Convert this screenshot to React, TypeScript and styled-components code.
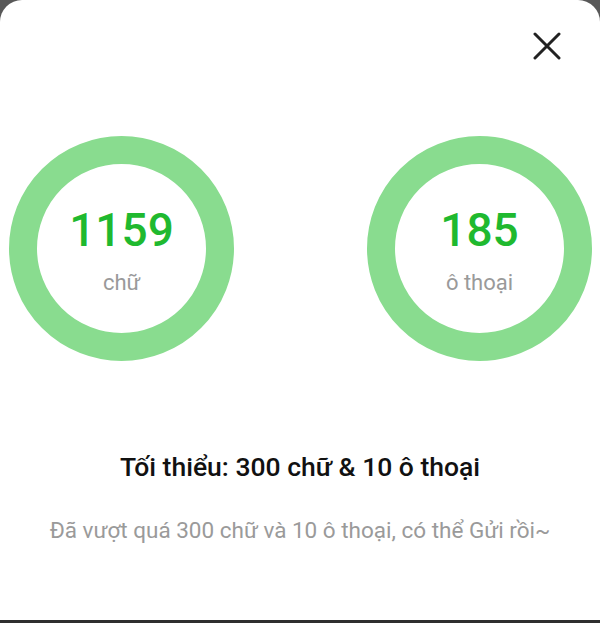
import React from "react";
import styled, { createGlobalStyle } from "styled-components";

const Global = createGlobalStyle`
  html, body {
    margin: 0;
    padding: 0;
    background: #333;
  }
  body {
    font-family: Roboto, "Noto Sans", "Liberation Sans", sans-serif;
  }
`;

const Backdrop = styled.div`
  width: 600px;
  height: 623px;
  background: #585858;
  border-bottom: 3px solid #2e2e2e;
  box-sizing: border-box;
`;

const Sheet = styled.div`
  width: 600px;
  height: 620px;
  background: #ffffff;
  border-radius: 22px 22px 0 0;
  display: flex;
  flex-direction: column;
`;

const Header = styled.div`
  height: 92px;
  display: flex;
  justify-content: flex-end;
  align-items: center;
  padding-right: 39px;
`;

const CloseButton = styled.button`
  width: 28px;
  height: 28px;
  padding: 0;
  border: none;
  background: none;
  display: flex;
  align-items: center;
  justify-content: center;
  cursor: pointer;
`;

const Stats = styled.div`
  margin-top: 44px;
  padding: 0 8px 0 9px;
  display: flex;
  justify-content: space-between;
`;

const Ring = styled.div`
  width: 225px;
  height: 225px;
  box-sizing: border-box;
  border: 28px solid #89dc8f;
  border-radius: 50%;
  padding-top: 4px;
  display: flex;
  flex-direction: column;
  align-items: center;
  justify-content: center;
  gap: 15px;
`;

const Count = styled.div`
  font-size: 46px;
  line-height: 50px;
  font-weight: 500;
  color: #1fb92f;
`;

const Unit = styled.div`
  font-size: 22px;
  line-height: 26px;
  color: #9a9a9a;
`;

const Title = styled.div`
  margin-top: 91px;
  text-align: center;
  font-size: 26.5px;
  line-height: 30px;
  font-weight: 500;
  color: #111;
`;

const Hint = styled.div`
  margin-top: 35px;
  text-align: center;
  font-size: 22.5px;
  line-height: 26px;
  color: #9a9a9a;
`;

const stats = [
  { value: "1159", unit: "chữ" },
  { value: "185", unit: "ô thoại" },
];

export default function App() {
  return (
    <>
      <Global />
      <Backdrop>
        <Sheet>
          <Header>
            <CloseButton aria-label="close">
              <svg width="28" height="28" viewBox="0 0 28 28">
                <path
                  d="M2 2 L26 26 M26 2 L2 26"
                  stroke="#222"
                  strokeWidth="3"
                  strokeLinecap="round"
                  fill="none"
                />
              </svg>
            </CloseButton>
          </Header>
          <Stats>
            {stats.map((s) => (
              <Ring key={s.unit}>
                <Count>{s.value}</Count>
                <Unit>{s.unit}</Unit>
              </Ring>
            ))}
          </Stats>
          <Title>Tối thiểu: 300 chữ &amp; 10 ô thoại</Title>
          <Hint>Đã vượt quá 300 chữ và 10 ô thoại, có thể Gửi rồi~</Hint>
        </Sheet>
      </Backdrop>
    </>
  );
}
